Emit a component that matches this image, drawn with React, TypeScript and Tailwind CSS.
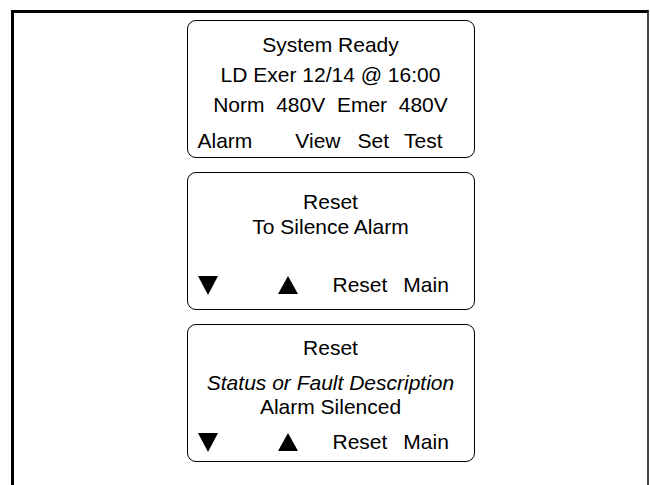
import React from "react";

const Down: React.FC = () => (
  <svg width="20" height="20" viewBox="0 0 20 20" className="block">
    <polygon points="0,1 20,1 10,20" fill="black" />
  </svg>
);

const Up: React.FC = () => (
  <svg width="20" height="20" viewBox="0 0 20 20" className="block">
    <polygon points="10,1 20,19 0,19" fill="black" />
  </svg>
);

const NavRow: React.FC = () => (
  <div className="flex items-center pl-[10px] h-[24px]">
    <Down />
    <span className="ml-[60px]">
      <Up />
    </span>
    <span className="ml-[35px]">Reset</span>
    <span className="ml-[16px]">Main</span>
  </div>
);

const box =
  "w-[288px] h-[138px] border-[1.5px] border-black rounded-[9px] flex flex-col";

const App: React.FC = () => {
  return (
    <div
      className="w-[650px] h-[485px] bg-white overflow-hidden text-black text-[21px]"
      style={{ fontFamily: '"Liberation Sans", Arial, sans-serif' }}
    >
      <div className="ml-[11px] mt-[10px] w-[638px] h-[500px] border-l-[3px] border-t-[3px] border-r-2 border-black border-r-[#444] flex flex-col items-center pt-[7px] gap-[14px]">
        {/* main status screen */}
        <div className={box + " pt-[9px]"}>
          <div className="text-center leading-[30px]">System Ready</div>
          <div className="text-center leading-[30px]">LD Exer 12/14 @ 16:00</div>
          <div className="text-center leading-[30px]">Norm&nbsp; 480V&nbsp; Emer&nbsp; 480V</div>
          <div className="flex leading-[30px] pl-[10px] mt-[6px]">
            <span>Alarm</span>
            <span className="ml-[43px]">View</span>
            <span className="ml-[17px]">Set</span>
            <span className="ml-[15px]">Test</span>
          </div>
        </div>

        {/* reset prompt */}
        <div className={box + " pt-[16px] justify-between pb-[12px]"}>
          <div className="text-center leading-[25px]">
            <div>Reset</div>
            <div>To Silence Alarm</div>
          </div>
          <NavRow />
        </div>

        {/* silenced */}
        <div className={box + " pt-[10px] pb-[7px] justify-between"}>
          <div className="text-center leading-[25px]">Reset</div>
          <div className="text-center leading-[24px] -mt-[1px]">
            <div className="italic">Status or Fault Description</div>
            <div>Alarm Silenced</div>
          </div>
          <NavRow />
        </div>
      </div>
    </div>
  );
};

export default App;
